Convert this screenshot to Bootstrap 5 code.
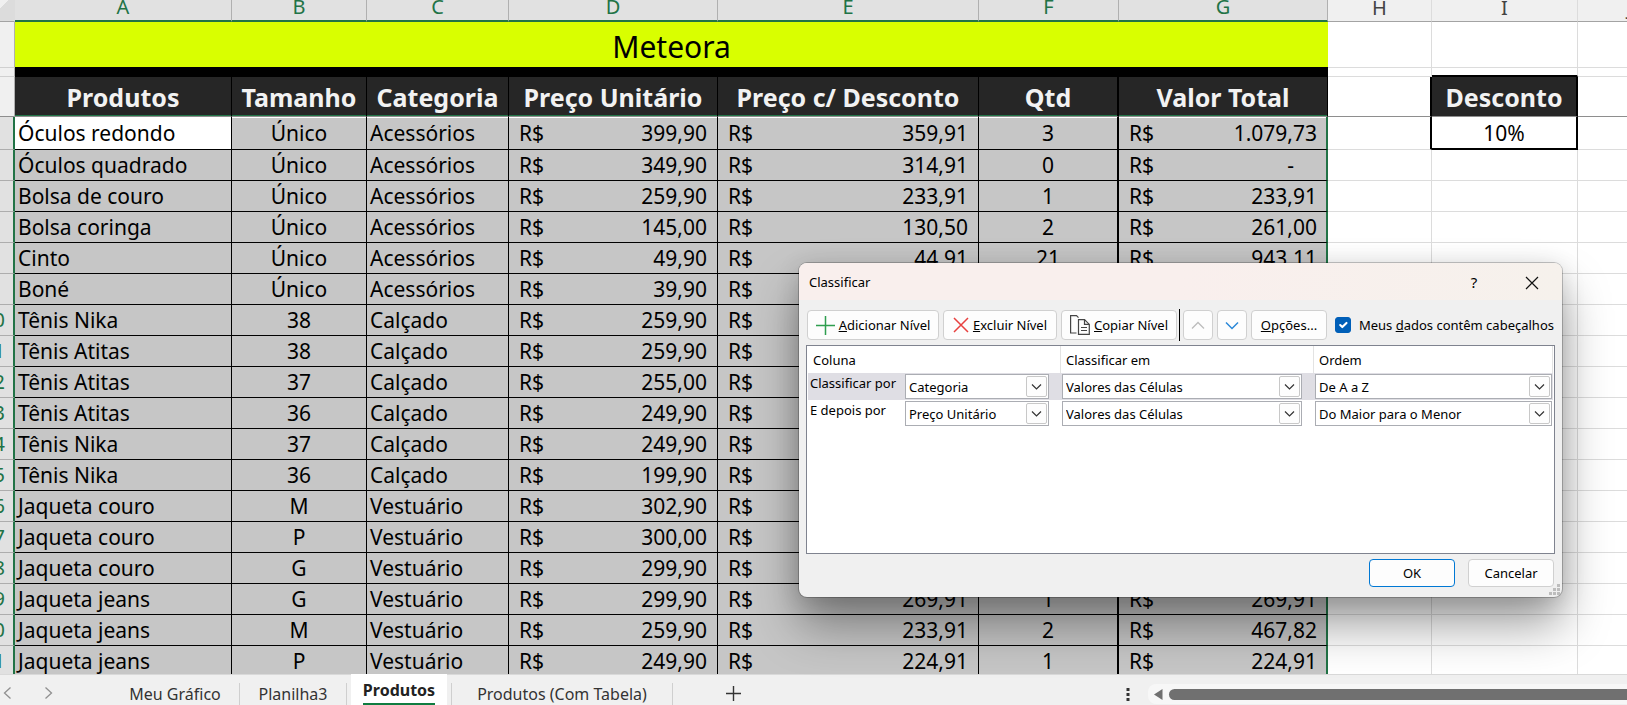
<!DOCTYPE html>
<html lang="pt-BR">
<head>
<meta charset="utf-8">
<meta name="viewport" content="width=device-width, initial-scale=1">
<title>Meteora</title>
<link href="https://cdn.jsdelivr.net/npm/bootstrap@5.3.0/dist/css/bootstrap.min.css" rel="stylesheet">
<script src="https://cdn.jsdelivr.net/npm/bootstrap@5.3.0/dist/js/bootstrap.bundle.min.js"></script>
<style>
:root { --xl-green: #217346; --grid: #dcdcdc; --font: "Noto Sans", "Open Sans", sans-serif; }
body { font-family: var(--font); background: #f0f0f0; color: #000; }

/* Sheet */
.sheet-view { background: #fff; min-height: 0; }
.sheet { table-layout: fixed; width: calc(100% + 82px); min-width: 1708px; margin: -6px 0 0 -26px; border-collapse: separate; border-spacing: 0; font-size: 21px; line-height: 30px; }
.sheet td, .sheet th { padding: 0; white-space: nowrap; border: 0 solid var(--grid); border-right-width: 1px; border-bottom-width: 1px; }
.c-num { width: 41px; } .c-a { width: 217px; } .c-b { width: 135px; } .c-c { width: 142px; }
.c-d { width: 209px; } .c-e { width: 261px; } .c-f { width: 140px; } .c-g { width: 209px; }
.c-h { width: 104px; } .c-i { width: 146px; }

.letters th { height: 28px; line-height: 26px; font-size: 20px; font-weight: 400; text-align: center; background: #f0f0f0; color: #444; border-bottom-color: #a3a3a3 !important; }
.letters th.picked { background: #e1e1e1; color: var(--xl-green); border-right-color: #b0b0b0; border-bottom: 2px solid var(--xl-green) !important; }
.sheet .corner { background: linear-gradient(135deg, #f0f0f0 60%, #dcdcdc 60%); }
.sheet .row-no { text-align: center; font-size: 20px; font-weight: 400; color: var(--xl-green); background: #f0f0f0; border-right-color: #b0b0b0; border-bottom-color: #d0d0d0; }
.sheet tbody .row-no { background: #e1e1e1; border-right: 2px solid var(--xl-green); border-bottom-color: #adadad; }

.band-title td { height: 46px; }
.sheet .brand { background: #d9ff00; font-size: 30px; line-height: 40px; text-align: center; border-right: 0; border-bottom-color: #000; padding-top: 4px; }
.band-gap td, .sheet .band-gap .row-no { height: 9px; line-height: 8px; }
.sheet .gap { background: #000; border-color: #000; }
.band-head > * { height: 40px; }
.sheet .band-head > * { border-bottom-color: #8e8e8e; }
.sheet .band-head .head { background: #262626; color: #f2f2f2; font-size: 25px; line-height: 36px; font-weight: 700; text-align: center; border-right-color: #000; }
.sheet .band-head .picked { box-shadow: inset 0 -1px var(--xl-green); }
.sheet .c-thick { border-right: 2px solid #000 !important; }
.sheet .gap-above { border-bottom: 2px solid #000; }

.items tr > * { height: 31px; }
.items tr:first-child > * { height: 33px; }
.sheet .items .v { background: #c6c6c6; border-color: #000; }
.sheet .items .v.active-cell { background: #fff; }
.items tr:first-child .v { box-shadow: inset 0 1px #fff; }
.sheet .items .total { border-right: 2px solid var(--xl-green); }
.txt { padding-left: 3px !important; }
.money { display: flex; justify-content: space-between; padding: 0 10px; }
.total .money { padding-right: 9px; }
.total .money.nil { padding-right: 32px; }
.sheet .rate { border-bottom: 2px solid #000 !important; }

/* Dialog */
.sort-dialog { position: absolute; left: 799px; top: 263px; width: 763px; height: 334px; font-size: 13px; line-height: 18px; background: #f0f0f0; border-radius: 8px; box-shadow: 0 0 0 1px rgba(0,0,0,.22), 0 28px 48px rgba(0,0,0,.38), 0 4px 24px rgba(0,0,0,.14); }
.dialog-title { height: 37px; padding: 0 7px 0 10px; gap: 12px; background: linear-gradient(90deg, #f9efed 50%, #f6f1ec); border-radius: 8px 8px 0 0; }
.dialog-title button { width: 46px; height: 36px; border: 0; background: none; padding: 0; font-size: 15px; }
.tools { height: 45px; padding: 10px 8px 5px; }
.tool { display: inline-flex; align-items: center; justify-content: center; height: 30px; padding: 0; background: #fdfdfd; border: 1px solid #d0d0d0; border-radius: 4px; color: #000; white-space: nowrap; }
.t-add { width: 132px; } .t-del { width: 114px; } .t-copy { width: 116px; } .t-move { width: 30px; } .t-opt { width: 76px; }
.tool-rule { width: 3px; height: 32px; border-right: 1px solid #000; margin-right: 3px; }
.tools .form-check-input { width: 16px; height: 16px; border-radius: 3px; }
.tools .form-check-input:checked { background-color: #005fb8; border-color: #005fb8; }
.levels { margin: 0 7px; height: 209px; background: #fff; border: 1px solid #7f838f; padding: 0 1px; }
.level { display: grid; grid-template-columns: 97px 144px 13px 240px 13px 1fr; height: 27px; padding: 1px 1px 1px 0; }
.level.chosen { background: #dfdee4; }
.level label { line-height: 18px; padding-left: 2px; }
.level-head { grid-template-columns: 253px 253px 1fr; padding: 0; }
.level-head > span { padding: 5px 0 0 5px; border-right: 1px solid #e3e3e3; }
.level select { appearance: none; height: 25px; width: 100%; border: 1px solid #abadb3; border-radius: 0; padding: 0 24px 0 3px; color: #000; line-height: 22px;
  background: #fff url("data:image/svg+xml,%3Csvg xmlns='http://www.w3.org/2000/svg' width='21' height='21'%3E%3Crect x='.5' y='.5' width='20' height='20' rx='1.500' fill='%23fdfdfd' stroke='%23c8c8c8'/%3E%3Cpath d='M6 8.500l4.500 4.500 4.500-4.500' fill='none' stroke='%23333' stroke-width='1.200'/%3E%3C/svg%3E") no-repeat right 1px center; }
.answers { padding: 5px 8px 0; gap: 13px; }
.answers .tool { width: 86px; height: 28px; }
.answers .ok { border-color: #0078d4; }
.grip { position: absolute; right: 2px; bottom: 2px; }

/* Tab bar */
.tab-bar { height: 31px; background: #f0f0f0; border-top: 1px solid #d9d9d9; font-size: 16px; line-height: 22px; color: #333; }
.tab-bar button { border: 0; background: none; padding: 0; color: inherit; }
.tab-bar .tab { padding-top: 8px; height: 30px; text-align: center; }
.tab-chart { width: 128px; } .tab-plain { width: 106px; } .tab-wide { width: 220px; } .tab-new { width: 120px; height: 28px; padding-top: 8px !important; }
.tab-rule { width: 1px; height: 22px; margin-top: 8px; background: #cfcfcf; }
.tab-bar .tab.current { background: #fff; width: 96px; height: 31px; margin: -1px 4px 0; padding-top: 5px; font-weight: 700; color: #222; }
.tab.current span { display: inline-block; height: 26px; border-bottom: 2px solid #107c41; }
.nav-arrows { width: 111px; padding: 11px 0 0 3px; gap: 31px; }
.stretch { flex: 2 1 0; }
.more { width: 40px; }
.more svg { margin-top: 5px; }
.h-track { flex: 3 1 0; height: 20px; margin-top: 9px; background: #f7f7f7; border-radius: 8px 0 0 8px; padding-left: 6px; gap: 6px; }
.h-thumb { height: 11px; background: #707070; border-radius: 6px 0 0 6px; }
</style>
</head>
<body class="vh-100 d-flex flex-column overflow-hidden position-relative">

<main class="sheet-view flex-grow-1 overflow-hidden">
<table class="sheet">
<colgroup><col class="c-num"><col class="c-a"><col class="c-b"><col class="c-c"><col class="c-d"><col class="c-e"><col class="c-f"><col class="c-g"><col class="c-h"><col class="c-i"><col></colgroup>
<thead>
<tr class="letters"><th class="corner"></th><th class="picked">A</th><th class="picked">B</th><th class="picked">C</th><th class="picked">D</th><th class="picked">E</th><th class="picked">F</th><th class="picked">G</th><th>H</th><th>I</th><th>J</th></tr>
<tr class="band-title"><td class="row-no"></td><td class="brand" colspan="7">Meteora</td><td></td><td></td><td></td></tr>
<tr class="band-gap"><td class="row-no"></td><td class="gap" colspan="7"></td><td></td><td class="gap-above"></td><td></td></tr>
<tr class="band-head"><td class="row-no"></td><th class="head picked">Produtos</th><th class="head picked">Tamanho</th><th class="head picked">Categoria</th><th class="head picked">Preço Unitário</th><th class="head picked">Preço c/ Desconto</th><th class="head picked c-thick">Qtd</th><th class="head picked">Valor Total</th><td class="c-thick"></td><th class="head c-thick">Desconto</th><td></td></tr>
</thead>
<tbody class="items">
<tr><th class="row-no"></th><td class="v txt active-cell">Óculos redondo</td><td class="v text-center">Único</td><td class="v txt">Acessórios</td><td class="v"><div class="money"><span>R$</span><span>399,90</span></div></td><td class="v"><div class="money"><span>R$</span><span>359,91</span></div></td><td class="v text-center c-thick">3</td><td class="v total"><div class="money"><span>R$</span><span>1.079,73</span></div></td><td class="c-thick"></td><td class="text-center c-thick rate">10%</td><td></td></tr>
<tr><th class="row-no"></th><td class="v txt">Óculos quadrado</td><td class="v text-center">Único</td><td class="v txt">Acessórios</td><td class="v"><div class="money"><span>R$</span><span>349,90</span></div></td><td class="v"><div class="money"><span>R$</span><span>314,91</span></div></td><td class="v text-center c-thick">0</td><td class="v total"><div class="money nil"><span>R$</span><span>-</span></div></td><td></td><td></td><td></td></tr>
<tr><th class="row-no"></th><td class="v txt">Bolsa de couro</td><td class="v text-center">Único</td><td class="v txt">Acessórios</td><td class="v"><div class="money"><span>R$</span><span>259,90</span></div></td><td class="v"><div class="money"><span>R$</span><span>233,91</span></div></td><td class="v text-center c-thick">1</td><td class="v total"><div class="money"><span>R$</span><span>233,91</span></div></td><td></td><td></td><td></td></tr>
<tr><th class="row-no"></th><td class="v txt">Bolsa coringa</td><td class="v text-center">Único</td><td class="v txt">Acessórios</td><td class="v"><div class="money"><span>R$</span><span>145,00</span></div></td><td class="v"><div class="money"><span>R$</span><span>130,50</span></div></td><td class="v text-center c-thick">2</td><td class="v total"><div class="money"><span>R$</span><span>261,00</span></div></td><td></td><td></td><td></td></tr>
<tr><th class="row-no"></th><td class="v txt">Cinto</td><td class="v text-center">Único</td><td class="v txt">Acessórios</td><td class="v"><div class="money"><span>R$</span><span>49,90</span></div></td><td class="v"><div class="money"><span>R$</span><span>44,91</span></div></td><td class="v text-center c-thick">21</td><td class="v total"><div class="money"><span>R$</span><span>943,11</span></div></td><td></td><td></td><td></td></tr>
<tr><th class="row-no"></th><td class="v txt">Boné</td><td class="v text-center">Único</td><td class="v txt">Acessórios</td><td class="v"><div class="money"><span>R$</span><span>39,90</span></div></td><td class="v"><div class="money"><span>R$</span></div></td><td class="v c-thick"></td><td class="v total"></td><td></td><td></td><td></td></tr>
<tr><th class="row-no">10</th><td class="v txt">Tênis Nika</td><td class="v text-center">38</td><td class="v txt">Calçado</td><td class="v"><div class="money"><span>R$</span><span>259,90</span></div></td><td class="v"><div class="money"><span>R$</span></div></td><td class="v c-thick"></td><td class="v total"></td><td></td><td></td><td></td></tr>
<tr><th class="row-no">11</th><td class="v txt">Tênis Atitas</td><td class="v text-center">38</td><td class="v txt">Calçado</td><td class="v"><div class="money"><span>R$</span><span>259,90</span></div></td><td class="v"><div class="money"><span>R$</span></div></td><td class="v c-thick"></td><td class="v total"></td><td></td><td></td><td></td></tr>
<tr><th class="row-no">12</th><td class="v txt">Tênis Atitas</td><td class="v text-center">37</td><td class="v txt">Calçado</td><td class="v"><div class="money"><span>R$</span><span>255,00</span></div></td><td class="v"><div class="money"><span>R$</span></div></td><td class="v c-thick"></td><td class="v total"></td><td></td><td></td><td></td></tr>
<tr><th class="row-no">13</th><td class="v txt">Tênis Atitas</td><td class="v text-center">36</td><td class="v txt">Calçado</td><td class="v"><div class="money"><span>R$</span><span>249,90</span></div></td><td class="v"><div class="money"><span>R$</span></div></td><td class="v c-thick"></td><td class="v total"></td><td></td><td></td><td></td></tr>
<tr><th class="row-no">14</th><td class="v txt">Tênis Nika</td><td class="v text-center">37</td><td class="v txt">Calçado</td><td class="v"><div class="money"><span>R$</span><span>249,90</span></div></td><td class="v"><div class="money"><span>R$</span></div></td><td class="v c-thick"></td><td class="v total"></td><td></td><td></td><td></td></tr>
<tr><th class="row-no">15</th><td class="v txt">Tênis Nika</td><td class="v text-center">36</td><td class="v txt">Calçado</td><td class="v"><div class="money"><span>R$</span><span>199,90</span></div></td><td class="v"><div class="money"><span>R$</span></div></td><td class="v c-thick"></td><td class="v total"></td><td></td><td></td><td></td></tr>
<tr><th class="row-no">16</th><td class="v txt">Jaqueta couro</td><td class="v text-center">M</td><td class="v txt">Vestuário</td><td class="v"><div class="money"><span>R$</span><span>302,90</span></div></td><td class="v"><div class="money"><span>R$</span></div></td><td class="v c-thick"></td><td class="v total"></td><td></td><td></td><td></td></tr>
<tr><th class="row-no">17</th><td class="v txt">Jaqueta couro</td><td class="v text-center">P</td><td class="v txt">Vestuário</td><td class="v"><div class="money"><span>R$</span><span>300,00</span></div></td><td class="v"><div class="money"><span>R$</span></div></td><td class="v c-thick"></td><td class="v total"></td><td></td><td></td><td></td></tr>
<tr><th class="row-no">18</th><td class="v txt">Jaqueta couro</td><td class="v text-center">G</td><td class="v txt">Vestuário</td><td class="v"><div class="money"><span>R$</span><span>299,90</span></div></td><td class="v"><div class="money"><span>R$</span></div></td><td class="v c-thick"></td><td class="v total"></td><td></td><td></td><td></td></tr>
<tr><th class="row-no">19</th><td class="v txt">Jaqueta jeans</td><td class="v text-center">G</td><td class="v txt">Vestuário</td><td class="v"><div class="money"><span>R$</span><span>299,90</span></div></td><td class="v"><div class="money"><span>R$</span><span>269,91</span></div></td><td class="v text-center c-thick">1</td><td class="v total"><div class="money"><span>R$</span><span>269,91</span></div></td><td></td><td></td><td></td></tr>
<tr><th class="row-no">20</th><td class="v txt">Jaqueta jeans</td><td class="v text-center">M</td><td class="v txt">Vestuário</td><td class="v"><div class="money"><span>R$</span><span>259,90</span></div></td><td class="v"><div class="money"><span>R$</span><span>233,91</span></div></td><td class="v text-center c-thick">2</td><td class="v total"><div class="money"><span>R$</span><span>467,82</span></div></td><td></td><td></td><td></td></tr>
<tr><th class="row-no">21</th><td class="v txt">Jaqueta jeans</td><td class="v text-center">P</td><td class="v txt">Vestuário</td><td class="v"><div class="money"><span>R$</span><span>249,90</span></div></td><td class="v"><div class="money"><span>R$</span><span>224,91</span></div></td><td class="v text-center c-thick">1</td><td class="v total"><div class="money"><span>R$</span><span>224,91</span></div></td><td></td><td></td><td></td></tr>
</tbody>
</table>
</main>

<section class="sort-dialog" role="dialog" aria-labelledby="sort-title">
  <div class="dialog-title d-flex align-items-center">
    <span id="sort-title" class="me-auto">Classificar</span>
    <button type="button">?</button>
    <button type="button" aria-label="Fechar"><svg width="14" height="14" viewBox="0 0 14 14" fill="none" stroke="#111" stroke-width="1.200"><path d="M1 1l12 12M13 1 1 13"/></svg></button>
  </div>
  <div class="tools d-flex align-items-center">
    <button type="button" class="tool t-add me-1"><svg class="me-1" width="19" height="19" viewBox="0 0 19 19" fill="none" stroke="#2f9e4f" stroke-width="1.500"><path d="M9.500 0v19M0 9.500h19"/></svg><span><u>A</u>dicionar Nível</span></button>
    <button type="button" class="tool t-del me-1"><svg class="me-1" width="16" height="16" viewBox="0 0 16 16" fill="none" stroke="#e8403f" stroke-width="1.500"><path d="M1 1l14 14M15 1 1 15"/></svg><span><u>E</u>xcluir Nível</span></button>
    <button type="button" class="tool t-copy"><svg class="me-1" width="20" height="20" viewBox="0 0 20 20" fill="none" stroke="#444" stroke-width="1.200"><path d="M6.500 18H.6V.6h5.900l2 2M8.500 4.600h6l4.800 4.800v10H8.500z" fill="#fdfdfd"/><path d="M14.500 4.600v4.800h4.800M11 12.500h6M11 15.500h6"/></svg><span><u>C</u>opiar Nível</span></button>
    <span class="tool-rule"></span>
    <button type="button" class="tool t-move me-1" aria-label="Mover para cima"><svg width="14" height="9" viewBox="0 0 14 9" fill="none" stroke="#bdbdbd" stroke-width="1.300"><path d="M1 7.500l6-6 6 6"/></svg></button>
    <button type="button" class="tool t-move me-1" aria-label="Mover para baixo"><svg width="14" height="9" viewBox="0 0 14 9" fill="none" stroke="#2b88d8" stroke-width="1.500"><path d="M1 1.500l6 6 6-6"/></svg></button>
    <button type="button" class="tool t-opt"><span><u>O</u>pções...</span></button>
    <input class="form-check-input m-0 ms-auto" type="checkbox" id="has-headers" checked>
    <label class="ms-2 text-nowrap" for="has-headers">Meus <u>d</u>ados contêm cabeçalhos</label>
  </div>
  <div class="levels">
    <div class="level level-head"><span>Coluna</span><span>Classificar em</span><span>Ordem</span></div>
    <div class="level chosen"><label for="col-1">Classificar por</label>
      <select id="col-1"><option>Categoria</option></select><span></span>
      <select aria-label="Classificar em"><option>Valores das Células</option></select><span></span>
      <select aria-label="Ordem"><option>De A a Z</option></select></div>
    <div class="level"><label for="col-2">E depois por</label>
      <select id="col-2"><option>Preço Unitário</option></select><span></span>
      <select aria-label="Classificar em"><option>Valores das Células</option></select><span></span>
      <select aria-label="Ordem"><option>Do Maior para o Menor</option></select></div>
  </div>
  <div class="answers d-flex justify-content-end">
    <button type="button" class="tool ok">OK</button>
    <button type="button" class="tool">Cancelar</button>
  </div>
  <svg class="grip" width="11" height="11" viewBox="0 0 11 11" fill="#bdbdbd"><path d="M8 0h3v3H8zM4 4h3v3H4zM8 4h3v3H8zM0 8h3v3H0zM4 8h3v3H4zM8 8h3v3H8z"/></svg>
</section>

<footer class="tab-bar d-flex flex-shrink-0 align-items-start">
  <div class="nav-arrows d-flex">
    <button type="button" aria-label="Anterior"><svg class="d-block" width="10" height="14" viewBox="0 0 10 14" fill="none" stroke="#909090" stroke-width="1.300"><path d="M7.500 1.500 1.500 7l6 5.500"/></svg></button>
    <button type="button" aria-label="Próxima"><svg class="d-block" width="10" height="14" viewBox="0 0 10 14" fill="none" stroke="#909090" stroke-width="1.300"><path d="M1.500 1.500l6 5.500-6 5.500"/></svg></button>
  </div>
  <button type="button" class="tab tab-chart">Meu Gráfico</button><span class="tab-rule"></span>
  <button type="button" class="tab tab-plain">Planilha3</button><span class="tab-rule"></span>
  <button type="button" class="tab current"><span>Produtos</span></button><span class="tab-rule"></span>
  <button type="button" class="tab tab-wide">Produtos (Com Tabela)</button><span class="tab-rule"></span>
  <button type="button" class="tab-new" aria-label="Nova planilha"><svg class="d-block mx-auto" width="15" height="15" viewBox="0 0 15 15" stroke="#333" stroke-width="1.400"><path d="M7.500 0v15M0 7.500h15"/></svg></button>
  <span class="stretch"></span>
  <button type="button" class="more" aria-label="Mais opções"><svg class="d-block mx-auto" width="4" height="22" viewBox="0 0 4 22" fill="#333"><path d="M.5 8h3v3h-3zM.5 13h3v3h-3zM.5 18h3v3h-3z"/></svg></button>
  <div class="h-track d-flex align-items-center"><svg width="9" height="11" viewBox="0 0 9 11" fill="#707070"><path d="M8.500 0v11L0 5.500z"/></svg><div class="h-thumb flex-grow-1"></div></div>
</footer>

</body>
</html>
